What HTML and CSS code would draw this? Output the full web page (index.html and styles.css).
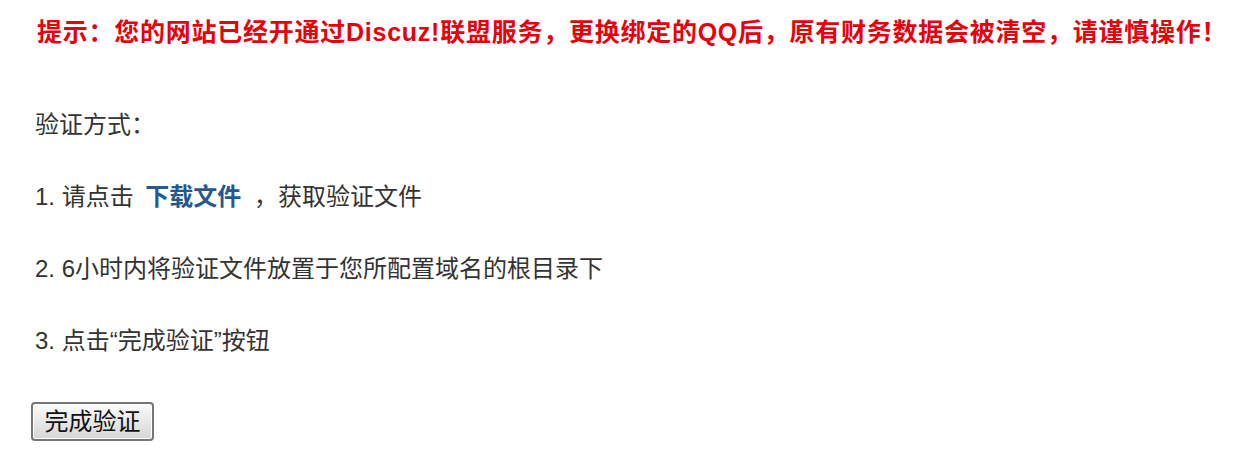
FILE: index.html
```html
<!DOCTYPE html>
<html lang="zh-CN">
<head>
<meta charset="utf-8">
<title>验证方式</title>
<link rel="stylesheet" href="styles.css">
</head>
<body>
<div class="page">
  <p class="notice">提示：您的网站已经开通过Discuz!联盟服务，更换绑定的QQ后，原有财务数据会被清空，请谨慎操作！</p>
  <div class="steps">
    <p class="line">验证方式：</p>
    <p class="line">1. 请点击 <a class="link" href="#">下载文件</a> ，获取验证文件</p>
    <p class="line">2. 6小时内将验证文件放置于您所配置域名的根目录下</p>
    <p class="line">3. 点击“完成验证”按钮</p>
  </div>
  <button class="btn" type="button">完成验证</button>
</div>
</body>
</html>
```
FILE: styles.css
```css
html, body {
  margin: 0;
  padding: 0;
  background: #ffffff;
}
.page {
  padding: 16px 0 0 35px;
  font-family: "Liberation Sans", "Noto Sans CJK SC", sans-serif;
  color: #333333;
}
.notice {
  margin: 0 0 0 2px;
  font-size: 25px;
  line-height: 32px;
  font-weight: bold;
  color: #e8000b;
  white-space: nowrap;
  letter-spacing: 0.75px;
}
.steps {
  display: flex;
  flex-direction: column;
  gap: 40px;
  margin-top: 61px;
}
.line {
  margin: 0;
  font-size: 24px;
  line-height: 32px;
  color: #333333;
}
.link {
  margin: 0 6px 0 5px;
  color: #24598f;
  font-weight: bold;
  text-decoration: none;
}
.btn {
  display: block;
  margin: 45px 0 0 -4px;
  width: 123px;
  height: 39px;
  padding: 0;
  font-family: "Liberation Sans", "Noto Sans CJK SC", sans-serif;
  font-size: 24px;
  line-height: 1;
  color: #111111;
  border: 2px solid #767676;
  border-radius: 4px;
  background: linear-gradient(#fbfbfb, #e8e8e8 50%, #d6d6d6);
  box-shadow: inset 0 0 0 1px #ffffff;
}
```
